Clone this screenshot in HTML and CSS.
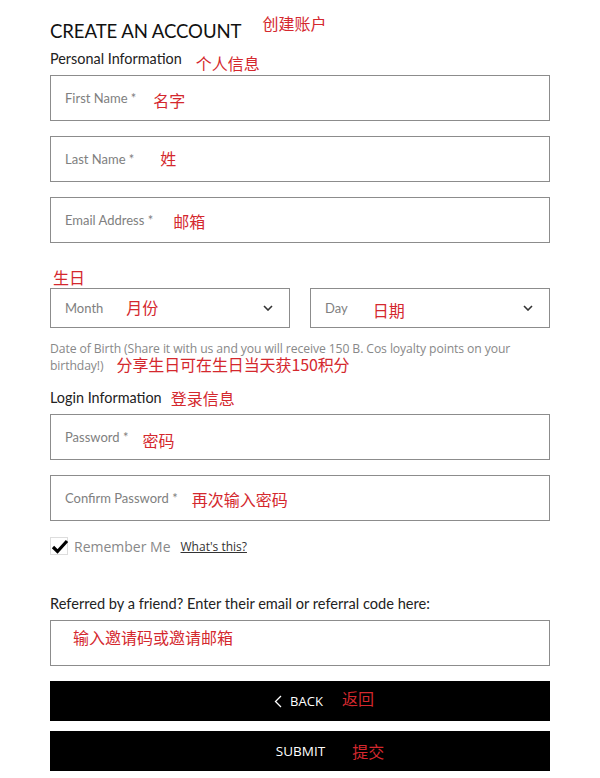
FILE: index.html
```html
<!DOCTYPE html>
<html lang="en">
<head>
<meta charset="utf-8">
<title>Create an Account</title>
<link rel="stylesheet" href="styles.css">
</head>
<body>
<div class="page">
  <div class="title-row">
    <h1 class="title">CREATE AN ACCOUNT</h1>
    <span class="note note-title">创建账户</span>
  </div>
  <div class="section-row">
    <span class="section">Personal Information</span>
    <span class="note note-section">个人信息</span>
  </div>
  <div class="field"><span class="ph">First Name *</span><span class="note n-first">名字</span></div>
  <div class="field"><span class="ph">Last Name *</span><span class="note n-last">姓</span></div>
  <div class="field"><span class="ph">Email Address *</span><span class="note n-email">邮箱</span></div>

  <div class="bday-note"><span class="note">生日</span></div>
  <div class="selects">
    <div class="select"><span class="ph">Month</span><span class="note n-month">月份</span>
      <svg class="chev" width="10" height="6" viewBox="0 0 10 6"><path d="M1 1 L5 5 L9 1" fill="none" stroke="#333" stroke-width="1.6"/></svg>
    </div>
    <div class="select"><span class="ph">Day</span><span class="note n-day">日期</span>
      <svg class="chev" width="10" height="6" viewBox="0 0 10 6"><path d="M1 1 L5 5 L9 1" fill="none" stroke="#333" stroke-width="1.6"/></svg>
    </div>
  </div>
  <p class="help">Date of Birth (Share it with us and you will receive 150 B. Cos loyalty points on your birthday!)<span class="note n-help">分享生日可在生日当天获150积分</span></p>

  <div class="section-row login-row">
    <span class="section">Login Information</span>
    <span class="note note-login">登录信息</span>
  </div>
  <div class="field"><span class="ph">Password *</span><span class="note n-pass">密码</span></div>
  <div class="field"><span class="ph">Confirm Password *</span><span class="note n-confirm">再次输入密码</span></div>

  <div class="remember">
    <span class="checkbox">
      <svg width="20" height="18" viewBox="0 0 20 18"><path d="M3 9 L7.5 13.5 L17 3" fill="none" stroke="#000" stroke-width="3.2"/></svg>
    </span>
    <span class="remember-label">Remember Me</span>
    <a class="whats" href="#">What's this?</a>
  </div>

  <p class="referred">Referred by a friend? Enter their email or referral code here:</p>
  <div class="field field-ref"><span class="note n-ref">输入邀请码或邀请邮箱</span></div>

  <button class="btn btn-back" type="button">
    <svg class="back-chev" width="8" height="13" viewBox="0 0 8 13"><path d="M7 1 L1.5 6.5 L7 12" fill="none" stroke="#fff" stroke-width="1.3"/></svg>
    <span>BACK</span><span class="note n-back">返回</span>
  </button>
  <button class="btn btn-submit" type="button"><span>SUBMIT</span><span class="note n-submit">提交</span></button>
</div>
</body>
</html>
```
FILE: styles.css
```css
* { box-sizing: border-box; }
body {
  margin: 0;
  background: #fff;
  font-family: Lato, "Open Sans", sans-serif;
  color: #222;
}
.page {
  width: 600px;
  padding: 14px 50px 0 50px;
}
.note {
  font-family: "Noto Sans CJK SC", "Noto Sans", sans-serif;
  color: #d4282e;
  font-size: 16px;
  line-height: 16px;
}
.title-row {
  display: flex;
  align-items: flex-start;
  height: 34px;
}
.title {
  margin: 6px 0 0 0;
  font-size: 18.6px;
  font-weight: 400;
  line-height: 22px;
  color: #111;
  letter-spacing: -0.1px;
}
.note-title { margin-left: 21px; margin-top: 1px; }
.section-row {
  display: flex;
  align-items: flex-start;
  height: 27px;
}
.section {
  font-size: 14.4px;
  line-height: 17px;
  margin-top: 2px;
  color: #222;
}
.note-section { margin-left: 14px; margin-top: 7px; }
.field {
  height: 46px;
  border: 1px solid #8c8c8c;
  display: flex;
  align-items: center;
  padding-left: 14px;
  margin-bottom: 15px;
}
.ph {
  font-size: 13px;
  color: #808080;
}
.n-first { margin-left: 17px; margin-top: 4px; }
.n-last { margin-left: 26px; margin-top: -2px; }
.n-email { margin-left: 20px; margin-top: 2px; }
.bday-note {
  margin-top: 0;
  padding-top: 10px;
  height: 30px;
  padding-left: 3px;
}
.selects {
  display: grid;
  grid-template-columns: 240px 240px;
  column-gap: 20px;
}
.select {
  height: 40px;
  border: 1px solid #8c8c8c;
  display: flex;
  align-items: center;
  padding: 0 16px 0 14px;
}
.n-month { margin-left: 23px; margin-top: -3px; }
.n-day { margin-left: 25px; margin-top: 4px; }
.chev { margin-left: auto; }
.help {
  margin: 12px 0 0 0;
  font-family: "Open Sans", sans-serif;
  font-size: 12.2px;
  line-height: 17px;
  color: #888;
  letter-spacing: -0.1px;
  padding-right: 30px;
}
.n-help { display: inline-block; margin-left: 13px; font-size: 16px; line-height: 15px; vertical-align: -1px; }
.login-row { margin-top: 13px; height: 27px; }
.note-login { margin-left: 9px; margin-top: 3px; }
.n-pass { margin-left: 14px; margin-top: 6px; }
.n-confirm { margin-left: 14px; margin-top: 2px; }
.remember {
  display: flex;
  align-items: center;
  height: 20px;
  margin-top: 1px;
}
.checkbox {
  width: 18px;
  height: 18px;
  border: 1px solid #ddd;
  position: relative;
}
.checkbox svg { position: absolute; left: -1px; top: 0px; }
.remember-label {
  font-family: "Open Sans", sans-serif;
  font-size: 14px;
  color: #888;
  margin-left: 6px;
}
.whats {
  font-family: "Open Sans", sans-serif;
  font-size: 12px;
  color: #333;
  margin-left: 10px;
  text-decoration: underline;
}
.referred {
  margin: 40px 0 0 0;
  font-size: 14.6px;
  line-height: 16px;
  color: #222;
}
.field-ref {
  margin-top: 8px;
  align-items: flex-start;
  padding-left: 22px;
  padding-top: 8px;
}
.btn {
  display: flex;
  align-items: center;
  justify-content: center;
  width: 500px;
  height: 40px;
  margin: 0;
  border: 0;
  background: #000;
  color: #fff;
  font-family: "Open Sans", sans-serif;
  font-size: 13px;
  padding: 0;
}
.btn-back { padding-left: 48px; }
.back-chev { margin-right: 8px; }
.n-back { margin-left: 19px; margin-top: -6px; }
.btn-submit { margin-top: 10px; padding-left: 60px; font-size: 13.5px; }
.n-submit { margin-left: 27px; margin-top: -1px; }
```
